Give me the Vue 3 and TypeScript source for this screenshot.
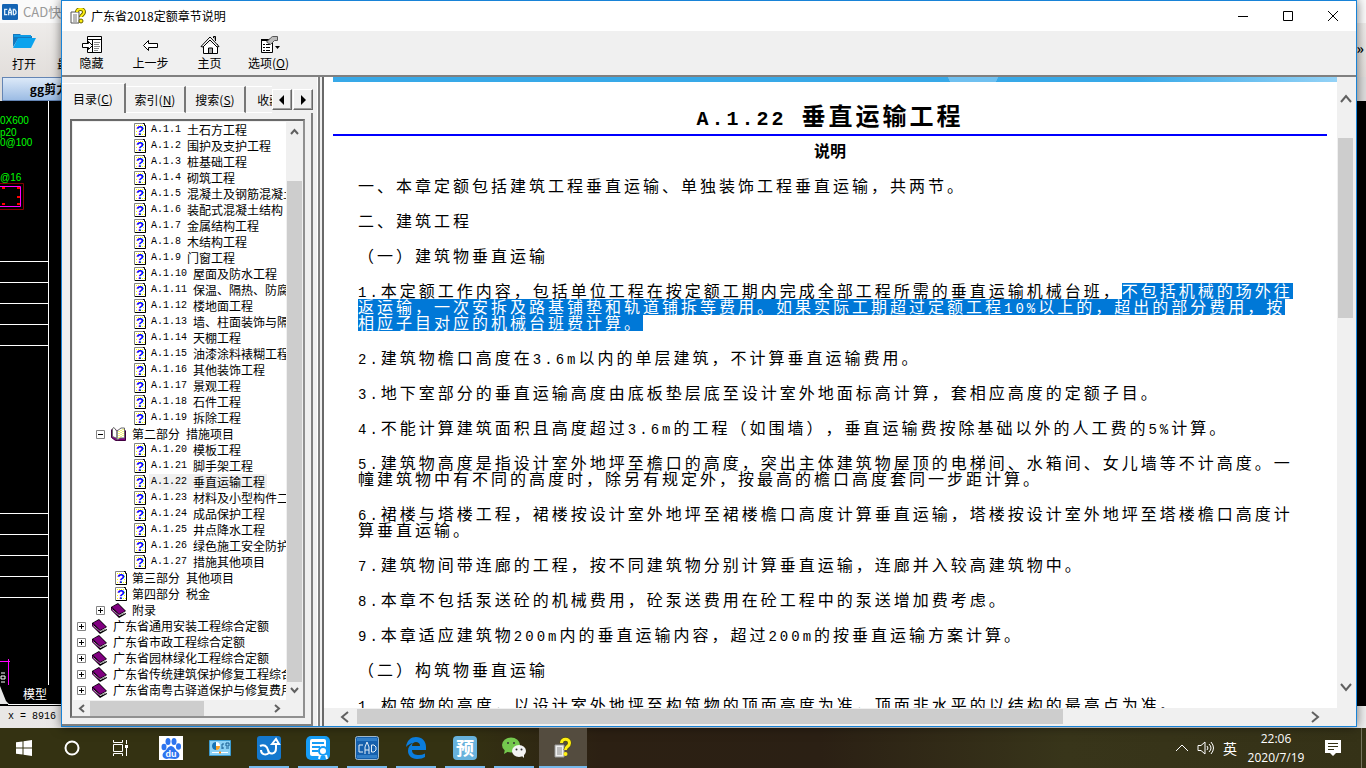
<script setup lang="ts">
import { ref } from 'vue'

interface TreeRow {
  level: number
  kind: 'doc' | 'book' | 'open'
  label: string
  toggle?: '+' | '-'
}
interface Run {
  text: string
  marked?: boolean
}

const chaptersOne = ['土石方工程', '围护及支护工程', '桩基础工程', '砌筑工程', '混凝土及钢筋混凝土工程', '装配式混凝土结构', '金属结构工程', '木结构工程', '门窗工程', '屋面及防水工程', '保温、隔热、防腐工程', '楼地面工程', '墙、柱面装饰与隔断', '天棚工程', '油漆涂料裱糊工程', '其他装饰工程', '景观工程', '石件工程', '拆除工程']
const chaptersTwo = ['模板工程', '脚手架工程', '垂直运输工程', '材料及小型构件二次', '成品保护工程', '井点降水工程', '绿色施工安全防护', '措施其他项目']
const toRow = (offset: number) => (name: string, i: number): TreeRow => ({ level: 3, kind: 'doc', label: `A.1.${i + offset} ${name}` })

const rows: TreeRow[] = [
  ...chaptersOne.map(toRow(1)),
  { level: 1, kind: 'open', label: '第二部分 措施项目', toggle: '-' },
  ...chaptersTwo.map(toRow(20)),
  { level: 2, kind: 'doc', label: '第三部分 其他项目' },
  { level: 2, kind: 'doc', label: '第四部分 税金' },
  { level: 1, kind: 'book', label: '附录', toggle: '+' },
  { level: 0, kind: 'book', label: '广东省通用安装工程综合定额', toggle: '+' },
  { level: 0, kind: 'book', label: '广东省市政工程综合定额', toggle: '+' },
  { level: 0, kind: 'book', label: '广东省园林绿化工程综合定额', toggle: '+' },
  { level: 0, kind: 'book', label: '广东省传统建筑保护修复工程综合', toggle: '+' },
  { level: 0, kind: 'book', label: '广东省南粤古驿道保护与修复费用', toggle: '+' },
]
const selected = ref('A.1.22 垂直运输工程')
const activeTab = ref('目录')
const tabs = [
  { name: '目录', key: 'C' },
  { name: '索引', key: 'N' },
  { name: '搜索', key: 'S' },
  { name: '收藏', key: 'I' },
]

const line = (text: string): Run[] => [{ text }]
const paragraphs: Run[][][] = [
  [line('一、本章定额包括建筑工程垂直运输、单独装饰工程垂直运输，共两节。')],
  [line('二、建筑工程')],
  [line('（一）建筑物垂直运输')],
  [
    [{ text: '1.本定额工作内容，包括单位工程在按定额工期内完成全部工程所需的垂直运输机械台班，' }, { text: '不包括机械的场外往', marked: true }],
    [{ text: '返运输，一次安拆及路基铺垫和轨道铺拆等费用。如果实际工期超过定额工程10%以上的，超出的部分费用，按', marked: true }],
    [{ text: '相应子目对应的机械台班费计算。', marked: true }],
  ],
  [line('2.建筑物檐口高度在3.6m以内的单层建筑，不计算垂直运输费用。')],
  [line('3.地下室部分的垂直运输高度由底板垫层底至设计室外地面标高计算，套相应高度的定额子目。')],
  [line('4.不能计算建筑面积且高度超过3.6m的工程（如围墙），垂直运输费按除基础以外的人工费的5%计算。')],
  [line('5.建筑物高度是指设计室外地坪至檐口的高度，突出主体建筑物屋顶的电梯间、水箱间、女儿墙等不计高度。一'), line('幢建筑物中有不同的高度时，除另有规定外，按最高的檐口高度套同一步距计算。')],
  [line('6.裙楼与塔楼工程，裙楼按设计室外地坪至裙楼檐口高度计算垂直运输，塔楼按设计室外地坪至塔楼檐口高度计'), line('算垂直运输。')],
  [line('7.建筑物间带连廊的工程，按不同建筑物分别计算垂直运输，连廊并入较高建筑物中。')],
  [line('8.本章不包括泵送砼的机械费用，砼泵送费用在砼工程中的泵送增加费考虑。')],
  [line('9.本章适应建筑物200m内的垂直运输内容，超过200m的按垂直运输方案计算。')],
  [line('（二）构筑物垂直运输')],
  [line('1.构筑物的高度，以设计室外地坪至构筑物的顶面高度为准，顶面非水平的以结构的最高点为准。')],
]

const split = (text: string) =>
  (text.match(/[\x20-\x7e]+|[^\x20-\x7e]+/g) ?? []).map((part) => ({ part, latin: /^[\x20-\x7e]/.test(part) }))
</script>

<template>
  <div class="desktop">
    <div class="stage">
      <section class="cad">
        <header class="cad-title">
          <svg width="16" height="16" viewBox="0 0 24 24"><rect width="24" height="24" rx="2" fill="#1464b4" /><path d="M8 8H4v8h4M10 17v-6l2-4 2 4v6M10 13h4M17 8h2l2 3v3l-2 2h-2z" fill="none" stroke="#dcecf8" stroke-width="2" /></svg>
          <span>CAD快速看图</span>
        </header>
        <div class="cad-tools">
          <button class="cad-open">
            <svg width="24" height="16" viewBox="0 0 24 16"><path d="M1 14V1h7l2 2h10v3H6z" fill="#1578bd" /><path d="M1 15 6 5h18l-5 10z" fill="#0aa3ee" /><path d="M2 3h17" stroke="#0d9be6" stroke-width="2" /></svg>
            打开
          </button>
          <button class="cad-open">最近</button>
          <span class="more">»</span>
        </div>
        <div class="cad-tabs"><button>gg剪力墙</button></div>
        <div class="drawing">
          <svg class="sheet" width="61" height="604" viewBox="0 101 61 604">
            <path d="M48.500 101V685M0 261.500H48M0 282.500H48M0 303.500H48M0 324.500H48M0 345.500H48M0 513.500H48M0 534.500H48M0 555.500H48M0 576.500H48M0 597.500H48" stroke="#fff" fill="none" />
            <g class="dims"><text x="0" y="124">0X600</text><text x="0" y="136">p20</text><text x="0" y="146">0@100</text><text x="0" y="181">@16</text></g>
            <path d="M0 183.500H23.500V209.500H0" stroke="#800000" fill="none" />
            <path d="M0 186.500H20.500V206.500H0" stroke="#f0f" fill="none" />
            <path d="M2 188h3M17 188h3M17 197h3M17 204h3M2 204h3" stroke="red" stroke-width="2" />
            <path d="M0 661.500H10M8.500 659V685" stroke="#f0f" fill="none" />
            <path d="M1 673h4M1 676h4v3H1zM1 682h4" stroke="#fff" fill="none" />
            <path d="M0 686 6 701 9 704H0z" fill="#e8e8e8" /><path d="M8 704.500H61" stroke="#fff" />
            <text class="model" x="23" y="699">模型</text>
          </svg>
        </div>
        <footer class="cad-status">x = 8916</footer>
      </section>

      <section class="window">
        <header class="titlebar">
          <svg width="16" height="16" viewBox="0 0 16 16"><path d="M1 4h8v11H1z" fill="#fff" stroke="#555" /><path d="M3 7h4M3 9h4M3 11h4M3 13h4" stroke="#777" /><path d="M7 4c0-4 7-4 7 0 0 3-3 3-3 5" fill="none" stroke="#665f00" stroke-width="4" /><path d="M7 4c0-4 7-4 7 0 0 3-3 3-3 5" fill="none" stroke="#ffef12" stroke-width="2" /><circle cx="11" cy="13" r="2" fill="#ffef12" stroke="#665f00" /></svg>
          <h2>广东省2018定额章节说明</h2>
          <button aria-label="最小化"><svg width="12" height="12"><path d="M1 6.500h10" stroke="#000" /></svg></button>
          <button aria-label="最大化"><svg width="12" height="12"><path d="M1.500 1.500h9v9h-9z" fill="none" stroke="#000" /></svg></button>
          <button aria-label="关闭"><svg width="12" height="12"><path d="m1 1 10 10M11 1 1 11" stroke="#000" /></svg></button>
        </header>
        <nav class="toolbar">
          <button><svg width="22" height="20" viewBox="0 0 22 20" fill="#fff" stroke="#000"><path d="M6.500 1.500h14v16h-14z" /><path d="M6 4.500h15M11.500 4v13" /><path d="M13 7.500h6M13 9.500h5M13 11.500h6M13 13.500h5M13 15.500h4" stroke="#888" /><path d="M1.500 8.500h6v-2l4 4-4 4v-2h-6z" /></svg><span>隐藏</span></button>
          <button><svg width="22" height="20" viewBox="0 0 22 20" fill="#fff" stroke="#000"><path d="m3.500 10.500 5-5v3h9v4h-9v3z" /></svg><span>上一步</span></button>
          <button><svg width="22" height="20" viewBox="0 0 22 20" fill="#fff" stroke="#000"><path d="M14.500 3V1.500h2V6" fill="#999" /><path d="M4.500 9v9.500h14V9" /><path d="m2 11.500 9-9.500 9 9.500-2 .5-7-7-7 7z" /><path d="M9.500 18v-5h4v5" fill="#aaa" /></svg><span>主页</span></button>
          <button><svg width="22" height="20" viewBox="0 0 22 20" fill="#fff" stroke="#000"><path d="M3.500 4.500h11v13h-11z" /><path d="M3 5h12" stroke-width="2" /><path d="M5 9.500h2M8 9.500h4M5 12.500h2M8 12.500h4M5 15.500h2M8 15.500h4" /><path d="m8.500 7 4-4 2-1.500h5v4h-3l-4 4z" fill="#bbb" stroke="#555" /><path d="M17 11h5l-2.500 3z" fill="#000" stroke="none" /></svg><span>选项(<u>O</u>)</span></button>
        </nav>
        <div class="body">
          <aside class="side">
            <div class="tabs" role="tablist">
              <button v-for="t in tabs" :key="t.name" role="tab" :aria-selected="activeTab === t.name" @click="activeTab = t.name">{{ t.name }}(<u>{{ t.key }}</u>)</button>
              <div class="spin">
                <button aria-label="向左"><svg width="6" height="10"><path d="M5 0v10L0 5z" /></svg></button>
                <button aria-label="向右"><svg width="6" height="10"><path d="M1 0v10l5-5z" /></svg></button>
              </div>
            </div>
            <div class="page">
              <div class="treebox">
                <ul class="tree">
                  <li v-for="r in rows" :key="r.label" :class="'level' + r.level">
                    <button v-if="r.toggle" class="toggle" :aria-label="'展开或折叠 ' + r.label">
                      <svg width="9" height="9"><path d="M.5.5h8v8h-8z" fill="#fff" stroke="#848484" /><path d="M2 4.500h5" stroke="#000" /><path v-if="r.toggle === '+'" d="M4.500 2v5" stroke="#000" /></svg>
                    </button>
                    <svg v-if="r.kind === 'doc'" class="doc" width="14" height="16" viewBox="0 0 14 16"><path d="M.5 1.500h9l2 2v11H.5z" fill="#fff" stroke="#848484" /><path d="M2 3.500h8M2 6.500h2M9 6.500h2M2 9.500h2M9 9.500h2M2 12.500h9" stroke="#ff0" stroke-dasharray="1 1" /><path d="M9 1.500h1.500v2h1v11H1" fill="none" stroke="#000" /><text x="6" y="13" text-anchor="middle">?</text></svg>
                    <svg v-else-if="r.kind === 'book'" width="17" height="16" viewBox="0 0 17 16"><path d="m1 5 7-4 8 8v3l-7 4-8-8z" fill="#000" /><path d="m2 8 7 6 7-3V9l-7 4-7-6z" fill="#fff" /><path d="m2 5 6-3 7 7-6 3z" fill="#800080" /><path d="M2 6v2l7 6" fill="none" stroke="#800080" /><path d="m10 13 5-2" stroke="#888" /></svg>
                    <svg v-else width="17" height="16" viewBox="0 0 17 16"><path d="M1.500 3.500v8l4 3h10v-10" fill="#800080" stroke="#400040" /><path d="M2.500 2.500 4 1.500l3 4v7l-4.500-2zM7 5l4-3h3.500v10H10l-3 2z" fill="#fff" stroke="#666" /><path d="M9 5v7M11 4v7M13 3v8" stroke="#ee0" stroke-dasharray="1 1" /></svg>
                    <button class="label" :class="{ chosen: selected === r.label }" @click="selected = r.label"><span v-for="(s, i) in split(r.label)" :key="i" :class="{ latin: s.latin }">{{ s.part }}</span></button>
                  </li>
                </ul>
                <div class="vbar">
                  <svg width="9" height="7"><path d="m1 6 3.500-4L8 6" /></svg><i class="thumb" /><svg width="9" height="7"><path d="m1 1 3.500 4L8 1" /></svg>
                </div>
                <div class="hbar">
                  <svg width="7" height="9"><path d="M6 1 2 4.500 6 8" /></svg><i class="thumb" /><svg width="7" height="9"><path d="m1 1 4 3.500L1 8" /></svg>
                </div>
              </div>
            </div>
          </aside>
          <div class="splitter" />
          <main class="viewer">
            <article>
              <div class="banner" />
              <h1><span class="latin">A.1.22 </span>垂直运输工程</h1>
              <h3>说明</h3>
              <div class="prose">
                <p v-for="(p, i) in paragraphs" :key="i">
                  <span v-for="(l, j) in p" :key="j" class="line"><span v-for="(run, k) in l" :key="k" class="run" :class="{ marked: run.marked }"><span v-for="(s, m) in split(run.text)" :key="m" :class="{ latin: s.latin }">{{ s.part }}</span></span></span>
                </p>
              </div>
            </article>
            <div class="vbar">
              <svg width="12" height="9"><path d="m1 8 5-6 5 6" /></svg><i class="thumb" /><svg width="12" height="9"><path d="m1 1 5 6 5-6" /></svg>
            </div>
            <div class="hbar">
              <svg width="9" height="12"><path d="M8 1 2 6l6 5" /></svg><i class="thumb" /><svg width="9" height="12"><path d="m1 1 6 5-6 5" /></svg>
            </div>
          </main>
        </div>
      </section>
    </div>

    <footer class="taskbar">
      <button class="sys" aria-label="开始"><svg width="16" height="16" fill="#fff"><path d="M0 2.300 6.500 1.400V7.500H0zM7.500 1.200 16 0v7.500H7.500zM0 8.500h6.500v6.100L0 13.700zM7.500 8.500H16V16l-8.500-1.200z" /></svg></button>
      <button class="sys" aria-label="搜索"><svg width="16" height="16"><circle cx="8" cy="8" r="6.500" fill="none" stroke="#fff" stroke-width="2" /></svg></button>
      <button class="sys" aria-label="任务视图"><svg width="17" height="16" fill="none" stroke="#fff"><path d="M1.500 0v2.500h9V0M1.500 16v-2.500h9V16M1.500 4.500h9v7h-9zM14.500 0v4M14.500 8v8" /><path d="M13 6.500h3" stroke-width="3" /></svg></button>
      <div class="apps">
        <button aria-label="百度"><svg width="24" height="24"><rect width="24" height="24" fill="#fff" /><g fill="#2c74ef"><ellipse cx="5" cy="11" rx="2.500" ry="3.300" /><ellipse cx="9" cy="5.500" rx="2.500" ry="3.500" /><ellipse cx="15" cy="5.500" rx="2.500" ry="3.500" /><ellipse cx="19.500" cy="10.500" rx="2.500" ry="3.300" /><path d="M12 10c3 0 4 4 7 6 3 3 1 7-3 7-3 0-5-1-8 0-4 0-6-4-3-7 3-2 4-6 7-6z" /></g><text x="12" y="21" text-anchor="middle" class="du">du</text></svg></button>
        <button aria-label="控制面板"><svg width="22" height="16"><path d="M.5.5h21v15H.5z" fill="#8cd1f5" stroke="#3a9bd1" /><circle cx="7" cy="6" r="4" fill="#fff" /><path d="M7 6V2a4 4 0 1 0 0 8z" fill="#1774b5" /><path d="M7 6h4a4 4 0 0 1-4 4z" fill="#f6a229" /><path d="M13 4h2M13 8h2M13 4v5M17 3h3v3h-3zM17 8h3" fill="none" stroke="#165d91" /><path d="M3 12.500h7M12 12.500h7" stroke="#fff" /><path d="M10 12.500h2" stroke="#f28a1a" stroke-width="2" /></svg></button>
        <button class="running" aria-label="同步工具"><svg width="24" height="24"><rect width="24" height="24" rx="3" fill="#1478ce" /><path d="M3 10c4-2 7 0 8 4 1 5 8 5 8-2V7" fill="none" stroke="#fff" stroke-width="2" /><path d="m15 8 4-5 3 5zM4 14c0 4 4 6 8 3" fill="none" stroke="#fff" stroke-width="2" /></svg></button>
        <button class="running" aria-label="证书工具"><svg width="24" height="24"><rect width="24" height="24" rx="5" fill="#169cf5" /><rect x="4" y="3" width="16" height="17" rx="2" fill="#fff" /><path d="M6 7h12M6 11h8M6 15h6" stroke="#169cf5" stroke-width="2" /><circle cx="17" cy="15" r="4" fill="#fff" stroke="#169cf5" stroke-width="2" /><path d="m14 19-1 4M20 19l1 4" stroke="#fff" stroke-width="2" /></svg></button>
        <button class="running" aria-label="CAD快速看图"><svg width="24" height="24"><rect x=".5" y=".5" width="23" height="23" rx="2" fill="#1560ad" stroke="#9fb8cb" /><path d="M2 2h20v3H2zM2 19h20v3H2z" fill="#317fc8" /><path d="M8 9H4v7h4M10 18v-7l2-5 2 5v7M10 14h4M16.500 9H19l2 2v3l-2 2h-2.500z" fill="none" stroke="#e6f0f8" stroke-width="1" /></svg></button>
        <button class="running" aria-label="Edge"><svg width="22" height="22"><path d="M1 10C2 3 6 0 11 0c6 0 10 4 10 10v3H7c0 4 3 5 7 5 2 0 4-.5 6-1.500V20c-2 1-4 2-8 2-6 0-9-4-9-8 0-4 2-6 5-8-3 .5-5 2-7 4zM7 9h8c0-3-2-4-4-4s-4 1-4 4z" fill="#0b7ddd" /></svg></button>
        <button class="running" aria-label="预算软件"><svg width="24" height="24"><rect width="24" height="24" rx="4" fill="#67b2dc" /><text x="12" y="19" text-anchor="middle" class="yu">预</text></svg></button>
        <button class="running" aria-label="微信"><svg width="26" height="22"><path d="m4 12-1 5 5-3z" fill="#75c94e" /><ellipse cx="10" cy="8" rx="9" ry="7.500" fill="#75c94e" /><ellipse cx="18" cy="14" rx="7" ry="6" fill="#f4f4f4" /><path d="m20 18 3 3v-5z" fill="#f4f4f4" /><g fill="#333"><circle cx="7" cy="6" r="1" /><circle cx="13" cy="6" r="1" /><circle cx="15.500" cy="12.500" r="1" /><circle cx="20.500" cy="12.500" r="1" /></g></svg></button>
        <button class="running current" aria-label="帮助"><svg width="18" height="22"><path d="M1 8h9v12H1z" fill="#eee" stroke="#999" /><path d="M3 11h5M3 13h5M3 15h5M3 17h5" stroke="#888" /><path d="M7.500 6c0-5 8-5 8 0 0 4-4 3-4 7" fill="none" stroke="#554f00" stroke-width="4" /><path d="M7.500 6c0-5 8-5 8 0 0 4-4 3-4 7" fill="none" stroke="#ffef12" stroke-width="3" /><circle cx="11.500" cy="17" r="2" fill="#ffef12" /></svg></button>
      </div>
      <div class="tray">
        <button aria-label="显示隐藏的图标"><svg width="14" height="8"><path d="m1 7 6-6 6 6" fill="none" stroke="#fff" /></svg></button>
        <button aria-label="音量"><svg width="18" height="14" fill="none" stroke="#fff"><path d="M1 4.500h3l4-3.500v12L4 9.500H1zM10 5q2 2 0 4M12 3q4 4 0 8M14 1q5 6 0 12" /></svg></button>
        <button class="ime">英</button>
        <button class="clock"><span>22:06</span><span>2020/7/19</span></button>
        <button class="note" aria-label="通知"><svg width="16" height="16"><path d="M0 0h16v13h-5l-3 3-3-3H0z" fill="#fff" /><path d="M3 3.500h10M3 6.500h10M3 9.500h6" stroke="#333014" /></svg></button>
      </div>
    </footer>
  </div>
</template>

<style>
html, body { margin: 0; overflow: hidden; }
</style>

<style scoped>
.desktop { display: flex; flex-direction: column; height: 100vh; overflow: hidden; font: 12px/16px "Noto Sans CJK SC", sans-serif; color: #000; }
.desktop * { box-sizing: border-box; }
button { display: flex; align-items: center; justify-content: center; margin: 0; padding: 0; border: 0; background: none; font: inherit; color: inherit; white-space: nowrap; }
svg { flex: none; }
.stage { position: relative; flex: 1; min-height: 0; }

.cad { display: flex; flex-direction: column; height: 100%; background: #f0f0f0; }
.cad-title { display: flex; align-items: center; gap: 5px; height: 23px; padding-left: 2px; background: #fafafa; color: #999; font-size: 13px; }
.cad-tools { display: flex; align-items: flex-end; height: 54px; padding: 0 2px 5px 12px; gap: 21px; background: linear-gradient(#eeecea, #e2dedb); }
.cad-open { flex-direction: column; gap: 7px; }
.more { margin: 0 0 16px auto; font-size: 14px; font-weight: bold; }
.cad-tabs { height: 24px; padding-left: 2px; background: #ddd; }
.cad-tabs button { width: 120px; height: 24px; padding-right: 14px; border: 1px solid #6485b4; background: linear-gradient(#dce9f8, #9cbce4); font-weight: bold; }
.drawing { flex: 1; min-height: 0; background: #000; }
.sheet { display: block; }
.dims { fill: #0f0; font: 10px "Liberation Sans", sans-serif; }
.model { fill: #fff; font-size: 12px; }
.cad-status { height: 22px; padding: 3px 8px; background: linear-gradient(90deg, #e9e7e6, #eee); font: 10px/16px "Liberation Mono", monospace; }

.window { position: absolute; inset: 0 9px 1px 61px; display: flex; flex-direction: column; border: 1px solid #1883d7; background: #f0f0f0; box-shadow: 0 0 10px #0008; }
.titlebar { display: flex; align-items: center; height: 30px; padding: 0 1px 0 8px; background: #fff; }
.titlebar h2 { flex: 1; margin: 0 0 0 5px; font-size: 12px; font-weight: 400; }
.titlebar button { width: 45px; height: 30px; }
.toolbar { display: flex; height: 44px; }
.toolbar button { flex-direction: column; width: 59px; padding-bottom: 1px; }
.toolbar svg { overflow: visible; }
.body { display: flex; flex: 1; min-height: 0; border-top: 2px solid #808080; }
.side { display: flex; flex-direction: column; width: 251px; padding-top: 6px; }
.tabs { display: flex; align-items: flex-end; height: 30px; position: relative; overflow: hidden; }
.tabs > button { flex: none; width: 60px; height: 27px; border-top: 1px solid #fff; border-right: 2px solid #777; border-bottom: 1px solid #fff; }
.tabs > button[aria-selected='true'] { width: 64px; height: 30px; border-bottom: 0; }
.spin { position: absolute; inset: 0 0 0 auto; display: flex; align-items: flex-end; gap: 1px; padding-bottom: 3px; background: #f0f0f0; }
.spin button { width: 20px; height: 21px; border: 1px solid; border-color: #fff #696969 #696969 #fff; box-shadow: inset -1px -1px #a0a0a0; }
.page { flex: 1; min-height: 0; padding: 6px 6px 6px 8px; border-right: 2px solid #808080; border-bottom: 2px solid #808080; }
.treebox { display: grid; grid-template: minmax(0, 1fr) 16px / minmax(0, 1fr) 16px; height: 100%; border: 2px solid #696969; border-right-color: #909090; border-bottom-color: #909090; padding: 1px 1px 0; background: #f0f0f0; }
.tree { margin: 0; padding: 0; overflow: hidden; list-style: none; background: #fff; }
.tree li { display: flex; align-items: center; height: 16px; padding-left: 4px; }
.tree .toggle { width: 9px; height: 9px; margin-right: 5px; }
.tree .level1 { padding-left: 23px; }
.tree .level2 { padding-left: 41px; }
.tree .level3 { padding-left: 60px; }
.label { height: 16px; margin-left: 3px; padding: 0 2px; white-space: pre; }
.doc { margin-left: 1px; }
.doc + .label { margin-left: 1px; }
.doc text { fill: #00f; font: bold 13px "Liberation Sans", sans-serif; }
.chosen { background: #f0f0f0; }
.label .latin { font: 10px/16px "Liberation Mono", monospace; }
.vbar, .hbar { display: flex; align-items: center; background: #f0f0f0; }
.vbar { flex-direction: column; padding: 6px 0; }
.vbar path, .hbar path { fill: none; stroke: #606060; stroke-width: 2; }
.thumb { background: #cdcdcd; }
.tree + .vbar .thumb { width: 15px; flex: 1; margin: 46px 0 5px; }
.treebox .hbar { padding: 0 5px; }
.treebox .hbar .thumb { height: 15px; width: 114px; margin: 0 auto 0 5px; }
.splitter { width: 11px; background: linear-gradient(90deg, #f0f0f0 4px, #fff 4px 5px, #808080 5px 7px, #f0f0f0 7px 9px, #696969 9px); }
.viewer { display: grid; flex: 1; min-width: 0; grid-template: minmax(0, 1fr) 17px / minmax(0, 1fr) 17px; padding: 0 2px 1px 0; }
article { min-width: 0; padding-left: 9px; overflow: hidden; background: #fff; }
.banner { height: 5px; background: radial-gradient(ellipse 25px 12px at 640px 0, #6fc0f0 98%, transparent), linear-gradient(90deg, #38a9e8 80%, #94d2f6); }
h1 { margin: 0 10px 0 0; padding: 17px 0 3px; border-bottom: 2px solid #00f; font: bold 24px/32px "Noto Sans CJK SC", sans-serif; letter-spacing: 3px; text-align: center; white-space: pre; }
h1 .latin { font-size: 20px; }
h3 { margin: 0 10px 20px 0; padding-top: 6px; font: bold 16px/16px "Noto Sans CJK SC", sans-serif; text-align: center; }
.prose { padding-left: 25px; font-size: 16px; line-height: 14px; letter-spacing: 3px; text-spacing-trim: space-all; white-space: nowrap; }
.prose p { margin: 0 0 19px; }
.line { display: flex; height: 16px; }
.run { height: 16px; }
.latin { font-family: "Liberation Mono", monospace; line-height: 0; }
.prose .latin { font-size: 14px; }
.marked { background: #0078d7; color: #fff; }
.viewer .vbar { padding: 17px 0 16px; }
.viewer .vbar .thumb { width: 15px; height: 180px; margin: 35px 0 auto; }
.viewer .hbar { padding: 0 17px 0 16px; }
.viewer .hbar .thumb { height: 15px; width: 72%; margin: 0 auto 0 8px; }

.taskbar { display: flex; height: 40px; background: linear-gradient(90deg, #343212 0 34%, #2c2013 44%, #2b2014 60%, #38351a 78%, #353217); color: #fff; }
.sys { width: 48px; }
.apps { display: flex; gap: 1px; margin-left: 3px; }
.apps button { position: relative; width: 48px; }
.running::after { content: ''; position: absolute; inset: auto 4px 0; height: 2px; background: #76b9ed; }
.current { background: #544c3f; }
.apps .current { background: #544c3f; }
.current::after { inset: auto 0 0; }
.du { fill: #fff; font: bold 9px "Liberation Sans", sans-serif; }
.yu { fill: #fff; font-weight: bold; font-size: 18px; }
.tray { display: flex; margin-left: auto; padding-right: 4px; }
.tray button { width: 24px; }
.tray .ime { font-size: 14px; }
.tray .clock { flex-direction: column; width: 68px; gap: 3px; font-family: "Open Sans", sans-serif; }
.tray .note { width: 52px; padding-right: 6px; border-right: 1px solid #77745f; }
</style>
